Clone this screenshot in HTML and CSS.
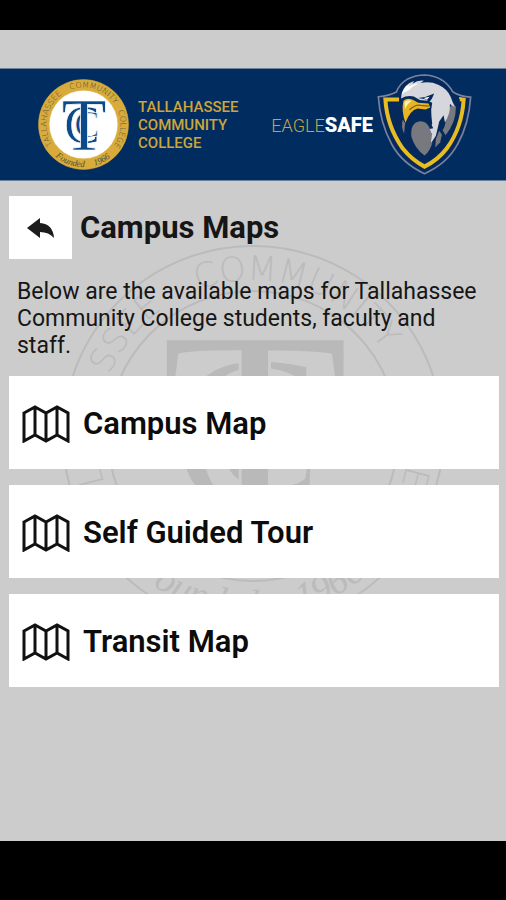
FILE: index.html
```
<!DOCTYPE html>
<html lang="en">
<head>
  <meta charset="UTF-8">
  <meta name="viewport" content="width=device-width, initial-scale=1">
  <title>Campus Maps</title>
  <link rel="stylesheet" href="styles.css">
</head>
<body>
  <div class="app">
    <header>
      <a class="college" href="#">
        <svg class="college-seal" viewBox="-192 -192 384 384" aria-hidden="true">
          <defs>
            <path id="arc-top" d="M0 156 A156 156 0 0 1 0 -156 A156 156 0 0 1 0 156"/>
            <path id="arc-bottom" d="M-180 0 A180 180 0 0 0 180 0"/>
          </defs>
          <g id="seal">
            <circle class="seal-ring" r="190"/>
            <circle class="seal-inner" r="145"/>
            <g class="seal-text">
              <text><textPath href="#arc-top" startOffset="28%">TALLAHASSEE</textPath></text>
              <text><textPath href="#arc-top" startOffset="55%">COMMUNITY</textPath></text>
              <text><textPath href="#arc-top" startOffset="77%">COLLEGE</textPath></text>
            </g>
            <g class="seal-founded">
              <text><textPath href="#arc-bottom" startOffset="39%">Founded</textPath></text>
              <text><textPath href="#arc-bottom" startOffset="65%">1966</textPath></text>
            </g>
            <g class="seal-letters">
              <text x="-6" y="76" font-size="228">C</text>
              <text x="14" y="54" font-size="160">C</text>
              <text x="2" y="107" font-size="312">T</text>
            </g>
          </g>
        </svg>
        <span>Tallahassee<br>Community<br>College</span>
      </a>
      <a class="eaglesafe" href="#">
        <span>EAGLE<b>SAFE</b></span>
        <svg class="eagle" viewBox="22 16 284 302" aria-hidden="true">
          <path fill="#06295c" stroke="#78829f" stroke-width="5" d="M26 84 Q58 82 80 70 Q88 46 112 32 Q137 19 165 19 Q197 21 219 36 Q239 51 249 70 Q272 84 302 85 C299 130 287 183 263 226 C243 264 207 295 164 314 C121 294 86 263 66 226 C42 182 29 131 26 84Z"/>
          <path fill="none" stroke="#e8bd22" stroke-width="12" d="M88 92 L47 92 C50 143 70 198 99 239 C119 264 139 280 164 293 C190 280 213 262 231 238 C260 198 278 143 281 93 L267 91"/>
          <path fill="#06295c" d="M91 82 Q80 130 92 190 L113 232 L164 272 L228 206 L264 138 L270 92 L245 70Z"/>
          <path fill="#77797e" d="M224 140 L249 102 L258 115 Q258 162 227 199 L218 184 Q232 164 224 140Z"/>
          <path fill="#77797e" d="M208 186 L216 197 L211 220 L196 236 L198 210Z"/>
          <path fill="#77797e" d="M99 153 L106 163 L103 194 Q93 174 99 153Z"/>
          <path fill="#d5d7dc" d="M94 89 Q95 58 119 43 L133 37 L128 45 Q143 34 162 36 L152 43 Q181 37 205 48 Q232 60 242 84 L254 115 L240 106 Q242 135 225 160 L221 139 L208 158 L202 184 L198 201 L183 224 L185 194 L176 181 L187 165 Q184 142 184 123 L187 102 L174 96 L150 94 L132 83 Q111 79 94 89Z"/>
          <path fill="#fff" d="M96 76 Q101 57 119 47 L116 56 Q133 43 145 45 Q128 52 116 65 Q103 70 96 76Z"/>
          <path fill="#06295c" d="M145 88 L166 85 L193 74 L186 90 L177 102 L171 92Z"/>
          <path fill="#fff" d="M161 88 L179 84 L172 92Z"/>
          <path fill="#e8b523" d="M101 96 Q112 86 129 93 L145 102 L176 104 L181 116 L167 122 L143 119 Q121 124 107 162 Q94 126 101 96Z"/>
          <path fill="#fff2bd" d="M104 100 Q113 91 126 97 Q112 104 106 121Z"/>
          <path fill="none" stroke="#805d16" stroke-width="4" d="M119 123 Q139 106 153 110 L177 112"/>
          <path fill="#06295c" d="M117 154 Q128 135 153 137 L175 146 L190 178 L176 181 L150 160 L121 205Z"/>
          <path fill="#77797e" d="M152 157 Q170 157 178 175 L185 194 L183 224 L188 220 Q181 247 164 260 Q134 238 125 204 Q120 160 152 157Z"/>
        </svg>
      </a>
    </header>

    <main>
      <svg class="watermark" viewBox="-192 -192 384 384" aria-hidden="true"><use href="#seal"/></svg>
      <div class="title">
        <button class="back" type="button" aria-label="Back">
          <svg viewBox="0 0 28 20" aria-hidden="true"><path d="M0 10 L13 0 V5 Q26 6 27 20 Q22 14 13 14 V20Z"/></svg>
        </button>
        <h1>Campus Maps</h1>
      </div>
      <p>Below are the available maps for Tallahassee Community College students, faculty and staff.</p>
      <nav>
        <a href="#">
          <svg viewBox="0 0 48 38" aria-hidden="true"><path id="map" d="M2 8 L13 2 L24 8 L35 2 L46 8 V36 L35 30 L24 36 L13 30 L2 36 Z M13 2 V30 M24 8 V36 M35 2 V30"/></svg>
          Campus Map
        </a>
        <a href="#">
          <svg viewBox="0 0 48 38" aria-hidden="true"><use href="#map"/></svg>
          Self Guided Tour
        </a>
        <a href="#">
          <svg viewBox="0 0 48 38" aria-hidden="true"><use href="#map"/></svg>
          Transit Map
        </a>
      </nav>
    </main>
  </div>
</body>
</html>
```
FILE: styles.css
```
* {
  box-sizing: border-box;
}
body {
  font-family: Roboto, sans-serif;
  background: #000;
  color: #161616;
  margin: 0;
  padding: 30px 0 59px;
  min-height: 100vh;
  display: flex;
}
a {
  color: inherit;
  text-decoration: none;
}
.app {
  flex: 1;
  background: #ccc;
  padding-top: 38px;
}

/* header */
header {
  background: #002c5f;
  border-top: 1px solid #6d7f99;
  border-bottom: 1px solid #6d7f99;
  height: 113px;
  padding: 0 34px 0 38px;
  display: flex;
  align-items: center;
  justify-content: space-between;
}
.college {
  display: flex;
  align-items: center;
  gap: 9px;
  color: #cda53c;
  font-size: 15px;
  font-weight: 500;
  line-height: 18px;
  text-transform: uppercase;
}
.college-seal {
  width: 91px;
  height: 91px;
  --ring: #d9ab3a;
  --ring-line: #d9ab3a;
  --inner: #fff;
  --ink: #4b5040;
  --letters: #0d4a8c;
}
.eaglesafe {
  display: flex;
  align-items: center;
  gap: 4px;
  color: #c4a44a;
  font-size: 18px;
  font-weight: 300;
}
.eaglesafe b {
  color: #fff;
  font-size: 20px;
  font-weight: 900;
}
.eagle {
  width: 95px;
  height: 101px;
}

/* college seal */
.seal-ring {
  fill: var(--ring);
  stroke: var(--ring-line);
  stroke-width: 2px;
}
.seal-inner {
  fill: var(--inner);
  stroke: var(--ring-line);
  stroke-width: 2px;
}
.seal-text {
  font-family: "DejaVu Sans", sans-serif;
  font-weight: 200;
  font-size: 34px;
  fill: var(--ink);
  text-anchor: middle;
}
.seal-founded {
  font-family: "Liberation Serif", serif;
  font-style: italic;
  font-size: 38px;
  fill: var(--ink);
  text-anchor: middle;
  text-transform: none;
}
.seal-letters {
  font-family: "Liberation Serif", serif;
  font-weight: 400;
  fill: var(--letters);
  stroke: var(--inner);
  stroke-width: 3px;
  text-anchor: middle;
}

/* content */
main {
  position: relative;
  z-index: 0;
  padding: 15px 7px 15px 9px;
}
.watermark {
  position: absolute;
  z-index: -1;
  top: 63px;
  left: 50%;
  width: 384px;
  height: 384px;
  transform: translateX(-50%);
  --ring: none;
  --ring-line: #bbb;
  --inner: #ccc;
  --ink: #bbb;
  --letters: #b9b9b9;
}
.title {
  display: flex;
  align-items: center;
  gap: 8px;
}
.back {
  width: 63px;
  height: 63px;
  padding: 0;
  border: 0;
  background: #fff;
  cursor: pointer;
  display: flex;
  align-items: center;
  justify-content: center;
}
.back svg {
  width: 28px;
  height: 20px;
  fill: #1c1c1c;
}
h1 {
  font-size: 31px;
  font-weight: 700;
  margin: 0;
}
p {
  font-size: 23px;
  line-height: 27px;
  margin: 19px 8px 17px;
}
nav {
  display: flex;
  flex-direction: column;
  gap: 16px;
}
nav a {
  display: flex;
  align-items: center;
  gap: 13px;
  height: 93px;
  padding: 3px 13px 0;
  background: #fff;
  color: #0c0c0c;
  font-size: 31px;
  line-height: 36px;
  font-weight: 600;
}
nav svg {
  width: 48px;
  height: 38px;
  fill: none;
  stroke: #111;
  stroke-width: 3px;
}
```
